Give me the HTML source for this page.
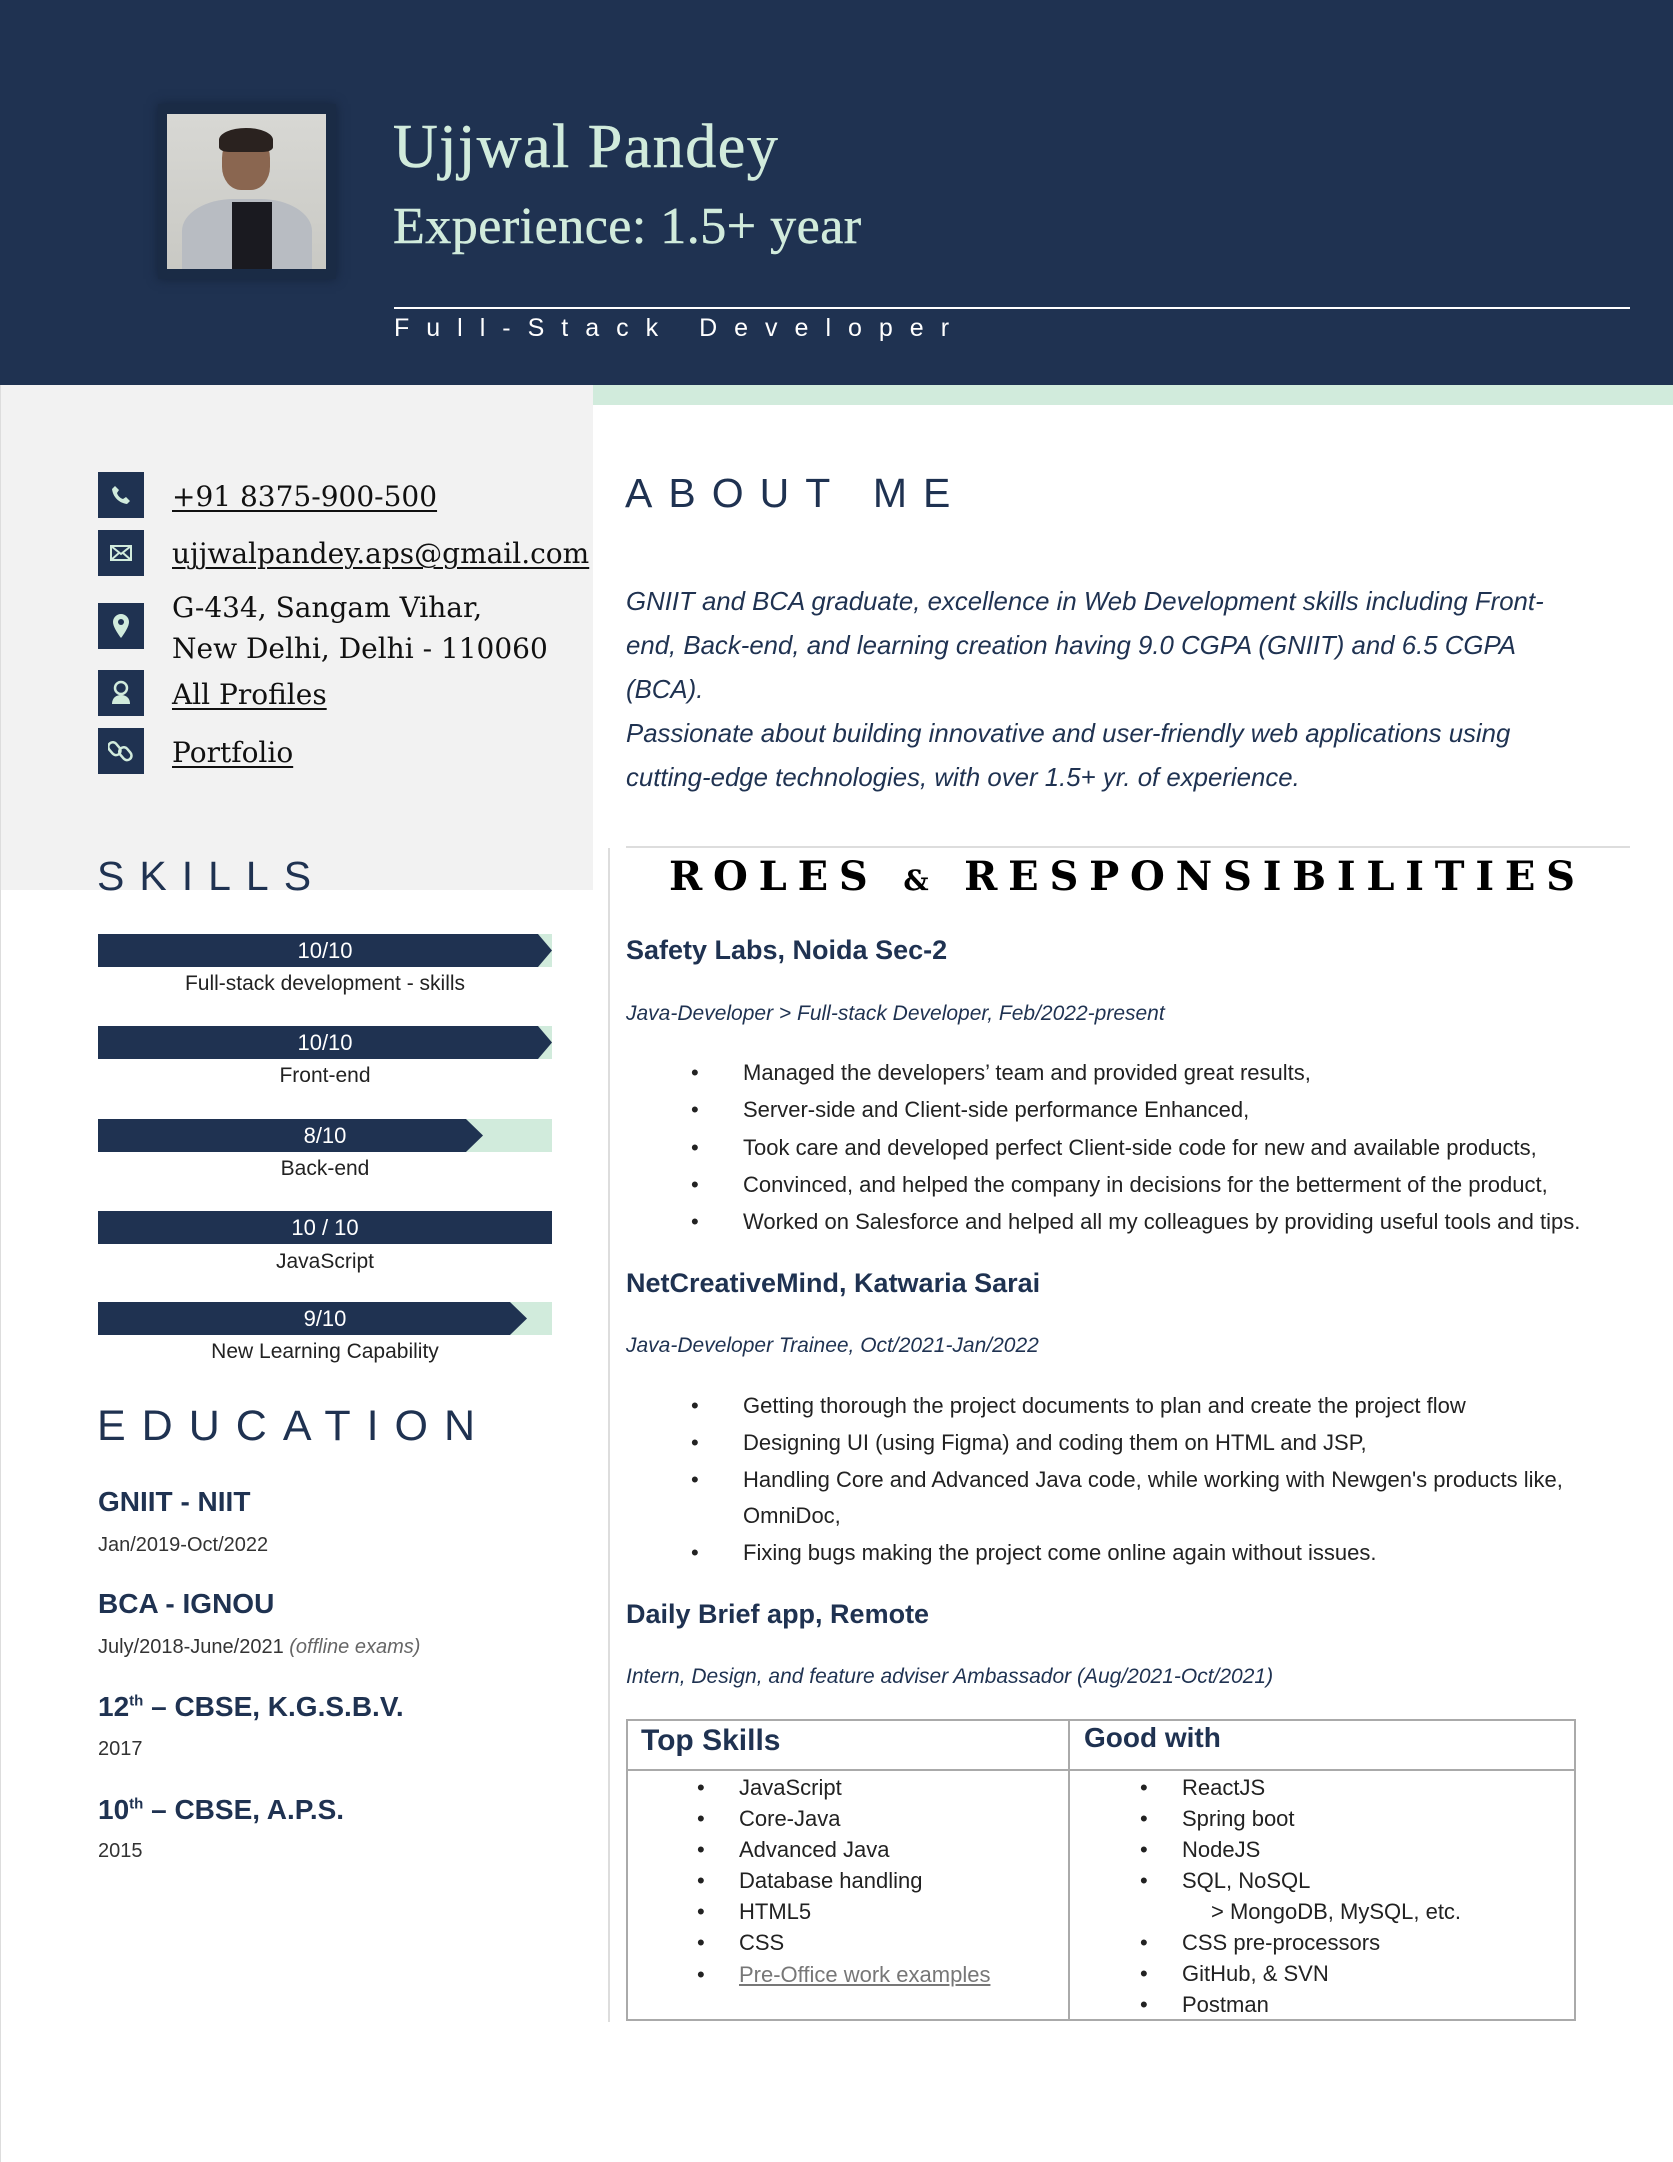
<!DOCTYPE html>
<html><head><meta charset="utf-8"><style>
*{margin:0;padding:0;box-sizing:border-box}
body{width:1673px;height:2162px;position:relative;background:#fff;font-family:"Liberation Sans",sans-serif;color:#1f3251;overflow:hidden}
.a{position:absolute;white-space:nowrap}
.hdr{left:0;top:0;width:1673px;height:385px;background:#1f3251}
.serif{font-family:"Liberation Serif",serif}
.ic{position:absolute;left:98px;width:46px;height:46px;background:#1f3251;display:flex;align-items:center;justify-content:center}
.ct{position:absolute;left:172px;font-family:"DejaVu Serif",serif;font-size:28px;color:#111;white-space:nowrap}
.ct u{text-decoration:underline;text-decoration-thickness:2px;text-underline-offset:4px}
.sec{font-size:41px;letter-spacing:16px;color:#1f3251}
.bar{position:absolute;left:98px;width:454px;height:33px;background:#d1ebdc}
.bar .d{position:absolute;left:0;top:0;height:33px;background:#1f3251}
.bar .t{position:absolute;left:0;width:454px;top:0;line-height:33px;text-align:center;color:#fff;font-size:22px}
.lbl{position:absolute;left:98px;width:454px;text-align:center;font-size:21px;color:#222}
.eh{font-size:28px;font-weight:bold;color:#1f3251}
.ed{font-size:20px;color:#333}
.job{font-size:27px;font-weight:bold;color:#1f3251}
.sub{font-size:21px;font-style:italic;color:#1f3251}
.bl{font-size:22px;color:#222}
.bl::before{content:"•";position:absolute;left:-52px}
.ti{font-size:22px;color:#222}
.ti::before{content:"•";position:absolute;left:-42px;color:#222}
</style></head><body>
<div class="a hdr"></div>
<div class="a" style="left:158px;top:104px;width:178px;height:175px;background:#1a2b45;box-shadow:0 0 10px #15233a"></div>
<div class="a" style="left:167px;top:114px;width:159px;height:155px;background:linear-gradient(180deg,#d8d8d4 0%,#c9c9c4 100%);overflow:hidden">
<div style="position:absolute;left:55px;top:18px;width:48px;height:58px;border-radius:45% 45% 40% 40%;background:#8a6650"></div>
<div style="position:absolute;left:52px;top:14px;width:54px;height:24px;border-radius:50% 50% 20% 20%;background:#2a221f"></div>
<div style="position:absolute;left:15px;top:85px;width:130px;height:80px;border-radius:40% 40% 0 0;background:#b8bcc2"></div>
<div style="position:absolute;left:65px;top:88px;width:40px;height:70px;background:#1a1a20"></div>
</div>
<div class="a serif" style="left:393px;top:112px;font-size:62px;line-height:70px;color:#d1ebdc;letter-spacing:1.5px;-webkit-text-stroke:0.6px #d1ebdc">Ujjwal Pandey</div>
<div class="a serif" style="left:393px;top:197px;font-size:52px;line-height:60px;color:#d1ebdc;letter-spacing:0.5px;-webkit-text-stroke:0.5px #d1ebdc">Experience: 1.5+ year</div>
<div class="a" style="left:394px;top:307px;width:1236px;height:2px;background:#fff"></div>
<div class="a" style="left:394px;top:314px;font-size:25px;letter-spacing:17px;color:#fff">Full-Stack Developer</div>
<div class="a" style="left:593px;top:385px;width:1080px;height:20px;background:#d1ebdc"></div>
<div class="a" style="left:0;top:385px;width:593px;height:505px;background:#f2f2f2"></div>
<div class="a" style="left:0;top:385px;width:1px;height:1777px;background:#ddd"></div>

<div class="ic" style="top:472px"><svg width="24" height="24" viewBox="0 0 24 24"><path d="M6 3l4 4-2 3c1 3 3 5 6 6l3-2 4 4-3 3C10 20 4 14 3 6z" fill="#d1ebdc"/></svg></div>
<div class="ct" style="top:480px"><u>+91 8375-900-500</u></div>
<div class="ic" style="top:530px"><svg width="24" height="20" viewBox="0 0 24 20"><rect x="2" y="3" width="20" height="14" fill="none" stroke="#d1ebdc" stroke-width="2"/><path d="M2 3l10 8 10-8M2 17l8-7M22 17l-8-7" fill="none" stroke="#d1ebdc" stroke-width="2"/></svg></div>
<div class="ct" style="top:537px"><u>ujjwalpandey.aps@gmail.com</u></div>
<div class="ic" style="top:603px"><svg width="20" height="28" viewBox="0 0 20 28"><path d="M10 2a8 8 0 0 0-8 8c0 6 8 16 8 16s8-10 8-16a8 8 0 0 0-8-8z" fill="#d1ebdc"/><circle cx="10" cy="10" r="3" fill="#1f3251"/></svg></div>
<div class="ct" style="top:587px;line-height:41px">G-434, Sangam Vihar,<br>New Delhi, Delhi - 110060</div>
<div class="ic" style="top:670px"><svg width="24" height="26" viewBox="0 0 24 26"><circle cx="12" cy="8" r="6" fill="none" stroke="#d1ebdc" stroke-width="2.5"/><path d="M3 24c0-6 4-9 9-9s9 3 9 9z" fill="#d1ebdc"/></svg></div>
<div class="ct" style="top:678px"><u>All Profiles</u></div>
<div class="ic" style="top:728px"><svg width="26" height="26" viewBox="0 0 26 26"><rect x="2" y="4" width="9" height="14" rx="4.5" transform="rotate(-40 6 11)" fill="none" stroke="#d1ebdc" stroke-width="2.5"/><rect x="13" y="9" width="9" height="14" rx="4.5" transform="rotate(-40 17 16)" fill="none" stroke="#d1ebdc" stroke-width="2.5"/></svg></div>
<div class="ct" style="top:736px"><u>Portfolio</u></div>

<div class="a sec" style="left:625px;top:470px">ABOUT ME</div>
<div class="a" style="left:626px;top:580px;font-size:25.8px;font-style:italic;line-height:44px;color:#1f3251">GNIIT and BCA graduate, excellence in Web Development skills including Front-<br>end, Back-end, and learning creation having 9.0 CGPA (GNIIT) and 6.5 CGPA<br>(BCA).<br>Passionate about building innovative and user-friendly web applications using<br>cutting-edge technologies, with over 1.5+ yr. of experience.</div>
<div class="a" style="left:626px;top:846px;width:1004px;height:2px;background:#ddd"></div>
<div class="a" style="left:608px;top:848px;width:2px;height:1174px;background:#ddd"></div>

<div class="a sec" style="left:97px;top:853px;letter-spacing:15px">SKILLS</div>
<div class="a" style="left:669px;top:853px;font-family:'DejaVu Serif',serif;font-weight:bold;font-size:40px;letter-spacing:10.8px;color:#000">ROLES <span style="font-size:28px">&amp;</span> RESPONSIBILITIES</div>

<div class="bar" style="top:934px"><div class="d" style="width:454px;clip-path:polygon(0 0,440px 0,454px 50%,440px 100%,0 100%)"></div><div class="t">10/10</div></div>
<div class="lbl" style="top:972px">Full-stack development - skills</div>
<div class="bar" style="top:1026px"><div class="d" style="width:454px;clip-path:polygon(0 0,440px 0,454px 50%,440px 100%,0 100%)"></div><div class="t">10/10</div></div>
<div class="lbl" style="top:1064px">Front-end</div>
<div class="bar" style="top:1119px"><div class="d" style="width:385px;clip-path:polygon(0 0,368px 0,385px 50%,368px 100%,0 100%)"></div><div class="t">8/10</div></div>
<div class="lbl" style="top:1157px">Back-end</div>
<div class="bar" style="top:1211px"><div class="d" style="width:454px"></div><div class="t">10 / 10</div></div>
<div class="lbl" style="top:1250px">JavaScript</div>
<div class="bar" style="top:1302px"><div class="d" style="width:429px;clip-path:polygon(0 0,412px 0,429px 50%,412px 100%,0 100%)"></div><div class="t">9/10</div></div>
<div class="lbl" style="top:1340px">New Learning Capability</div>

<div class="a sec" style="left:97px;top:1402px;font-size:43px;letter-spacing:16px">EDUCATION</div>
<div class="a eh" style="left:98px;top:1486px">GNIIT - NIIT</div>
<div class="a ed" style="left:98px;top:1534px">Jan/2019-Oct/2022</div>
<div class="a eh" style="left:98px;top:1588px">BCA - IGNOU</div>
<div class="a ed" style="left:98px;top:1636px">July/2018-June/2021 <i style="color:#666">(offline exams)</i></div>
<div class="a eh" style="left:98px;top:1691px">12<sup style="font-size:15px">th</sup> – CBSE, K.G.S.B.V.</div>
<div class="a ed" style="left:98px;top:1738px">2017</div>
<div class="a eh" style="left:98px;top:1794px">10<sup style="font-size:15px">th</sup> – CBSE, A.P.S.</div>
<div class="a ed" style="left:98px;top:1840px">2015</div>

<div class="a job" style="left:626px;top:935px">Safety Labs, Noida Sec-2</div>
<div class="a sub" style="left:626px;top:1002px">Java-Developer &gt; Full-stack Developer, Feb/2022-present</div>
<div class="a bl" style="left:743px;top:1060px">Managed the developers’ team and provided great results,</div>
<div class="a bl" style="left:743px;top:1097px">Server-side and Client-side performance Enhanced,</div>
<div class="a bl" style="left:743px;top:1135px">Took care and developed perfect Client-side code for new and available products,</div>
<div class="a bl" style="left:743px;top:1172px">Convinced, and helped the company in decisions for the betterment of the product,</div>
<div class="a bl" style="left:743px;top:1209px">Worked on Salesforce and helped all my colleagues by providing useful tools and tips.</div>
<div class="a job" style="left:626px;top:1268px">NetCreativeMind, Katwaria Sarai</div>
<div class="a sub" style="left:626px;top:1334px">Java-Developer Trainee, Oct/2021-Jan/2022</div>
<div class="a bl" style="left:743px;top:1393px">Getting thorough the project documents to plan and create the project flow</div>
<div class="a bl" style="left:743px;top:1430px">Designing UI (using Figma) and coding them on HTML and JSP,</div>
<div class="a bl" style="left:743px;top:1467px">Handling Core and Advanced Java code, while working with Newgen's products like,</div>
<div class="a" style="left:743px;top:1503px;font-size:22px;color:#222">OmniDoc,</div>
<div class="a bl" style="left:743px;top:1540px">Fixing bugs making the project come online again without issues.</div>
<div class="a job" style="left:626px;top:1599px">Daily Brief app, Remote</div>
<div class="a sub" style="left:626px;top:1665px">Intern, Design, and feature adviser Ambassador (Aug/2021-Oct/2021)</div>

<div class="a" style="left:626px;top:1719px;width:950px;height:302px;border:2px solid #aaa"></div>
<div class="a" style="left:1068px;top:1719px;width:2px;height:302px;background:#aaa"></div>
<div class="a" style="left:626px;top:1769px;width:950px;height:2px;background:#aaa"></div>
<div class="a" style="left:641px;top:1724px;font-size:30px;font-weight:bold;color:#1f3251">Top Skills</div>
<div class="a" style="left:1084px;top:1722px;font-size:28px;font-weight:bold;color:#1f3251">Good with</div>
<div class="a ti" style="left:739px;top:1775px">JavaScript</div>
<div class="a ti" style="left:739px;top:1806px">Core-Java</div>
<div class="a ti" style="left:739px;top:1837px">Advanced Java</div>
<div class="a ti" style="left:739px;top:1868px">Database handling</div>
<div class="a ti" style="left:739px;top:1899px">HTML5</div>
<div class="a ti" style="left:739px;top:1930px">CSS</div>
<div class="a ti" style="left:739px;top:1962px;color:#777;text-decoration:underline">Pre-Office work examples</div>
<div class="a ti" style="left:1182px;top:1775px">ReactJS</div>
<div class="a ti" style="left:1182px;top:1806px">Spring boot</div>
<div class="a ti" style="left:1182px;top:1837px">NodeJS</div>
<div class="a ti" style="left:1182px;top:1868px">SQL, NoSQL</div>
<div class="a" style="left:1211px;top:1899px;font-size:22px;color:#222">&gt; MongoDB, MySQL, etc.</div>
<div class="a ti" style="left:1182px;top:1930px">CSS pre-processors</div>
<div class="a ti" style="left:1182px;top:1961px">GitHub, &amp;  SVN</div>
<div class="a ti" style="left:1182px;top:1992px">Postman</div>
</body></html>
